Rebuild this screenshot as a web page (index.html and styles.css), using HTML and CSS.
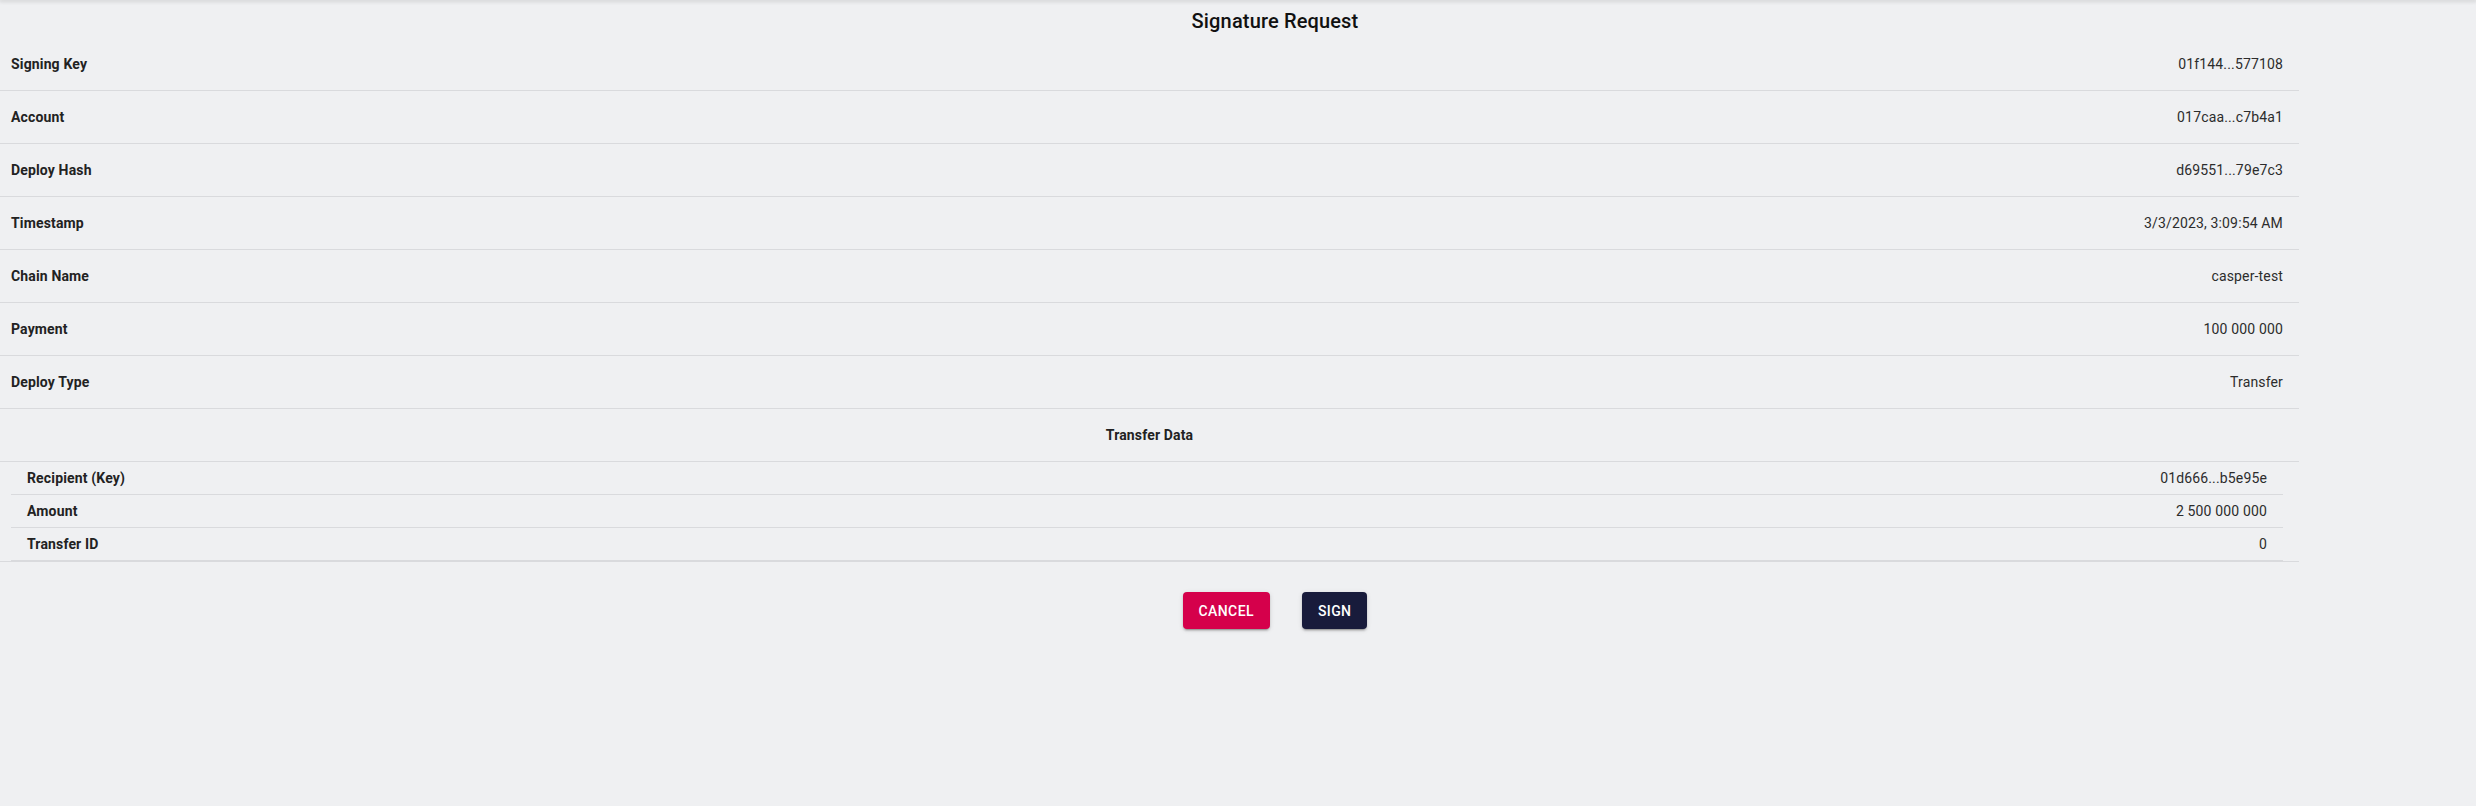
FILE: index.html
```html
<!DOCTYPE html>
<html lang="en">
<head>
<meta charset="utf-8">
<title>Signature Request</title>
<link rel="stylesheet" href="styles.css">
</head>
<body>
<div class="topbar"></div>
<main class="page">
  <h1 class="title">Signature Request</h1>
  <table class="details">
    <tbody>
      <tr><th class="label">Signing Key</th><td class="value">01f144...577108</td></tr>
      <tr><th class="label">Account</th><td class="value">017caa...c7b4a1</td></tr>
      <tr><th class="label">Deploy Hash</th><td class="value">d69551...79e7c3</td></tr>
      <tr><th class="label">Timestamp</th><td class="value">3/3/2023, 3:09:54 AM</td></tr>
      <tr><th class="label">Chain Name</th><td class="value">casper-test</td></tr>
      <tr><th class="label">Payment</th><td class="value">100 000 000</td></tr>
      <tr><th class="label">Deploy Type</th><td class="value">Transfer</td></tr>
      <tr><th class="label section" colspan="2">Transfer Data</th></tr>
      <tr>
        <td class="nested" colspan="2">
          <table class="transfer">
            <tbody>
              <tr><th class="sub-label">Recipient (Key)</th><td class="sub-value">01d666...b5e95e</td></tr>
              <tr><th class="sub-label">Amount</th><td class="sub-value">2 500 000 000</td></tr>
              <tr><th class="sub-label">Transfer ID</th><td class="sub-value">0</td></tr>
            </tbody>
          </table>
        </td>
      </tr>
    </tbody>
  </table>
  <div class="actions">
    <button class="btn btn-cancel" type="button">Cancel</button>
    <button class="btn btn-sign" type="button">Sign</button>
  </div>
</main>
</body>
</html>
```
FILE: styles.css
```css
html, body {
  margin: 0;
  padding: 0;
}

body {
  background: #eff0f2;
  font-family: Roboto, "Liberation Sans", Arial, sans-serif;
  color: rgba(0, 0, 0, 0.87);
  width: 2476px;
  height: 806px;
  overflow: hidden;
}

.topbar {
  height: 0;
  box-shadow: 0 0 4px 1px rgba(0, 0, 0, 0.22);
}

.page {
  display: flex;
  flex-direction: column;
}

.title {
  margin: 0;
  padding: 5px 0 0 74px;
  height: 33px;
  line-height: 32px;
  font-size: 20px;
  font-weight: 500;
  letter-spacing: 0.15px;
  text-align: center;
  color: #111;
}

.details {
  width: 2299px;
  border-collapse: collapse;
  border-spacing: 0;
}

.label,
.value {
  height: 52px;
  padding: 0 16px 0 11px;
  border-bottom: 1px solid #d9dadd;
  font-size: 14px;
  line-height: 20px;
  letter-spacing: 0.15px;
  vertical-align: middle;
}

.label {
  text-align: left;
  font-weight: 700;
  color: #222;
}

.value {
  text-align: right;
  font-weight: 400;
  color: #2c2c2c;
}

.section {
  text-align: center;
  padding: 0;
}

.nested {
  padding: 0 16px 0 11px;
  border-bottom: 1px solid #d9dadd;
}

.transfer {
  width: 100%;
  border-collapse: collapse;
  border-spacing: 0;
}

.sub-label,
.sub-value {
  height: 32px;
  padding: 0 16px;
  border-bottom: 1px solid #d9dadd;
  font-size: 14px;
  line-height: 20px;
  letter-spacing: 0.15px;
  vertical-align: middle;
}

.sub-label {
  text-align: left;
  font-weight: 700;
  color: #222;
}

.sub-value {
  text-align: right;
  color: #2c2c2c;
}

.actions {
  display: flex;
  justify-content: center;
  gap: 32px;
  padding-left: 74px;
  margin-top: 30px;
}

.btn {
  height: 37px;
  padding: 0 16px;
  border: none;
  border-radius: 4px;
  font-family: Roboto, "Liberation Sans", Arial, sans-serif;
  font-size: 14px;
  font-weight: 500;
  letter-spacing: 0.4px;
  text-transform: uppercase;
  color: #fff;
  cursor: pointer;
  box-shadow: 0 3px 1px -2px rgba(0, 0, 0, 0.2), 0 2px 2px 0 rgba(0, 0, 0, 0.14), 0 1px 5px 0 rgba(0, 0, 0, 0.12);
}

.btn-cancel {
  background: #d5004b;
}

.btn-sign {
  background: #181b3b;
}
```
